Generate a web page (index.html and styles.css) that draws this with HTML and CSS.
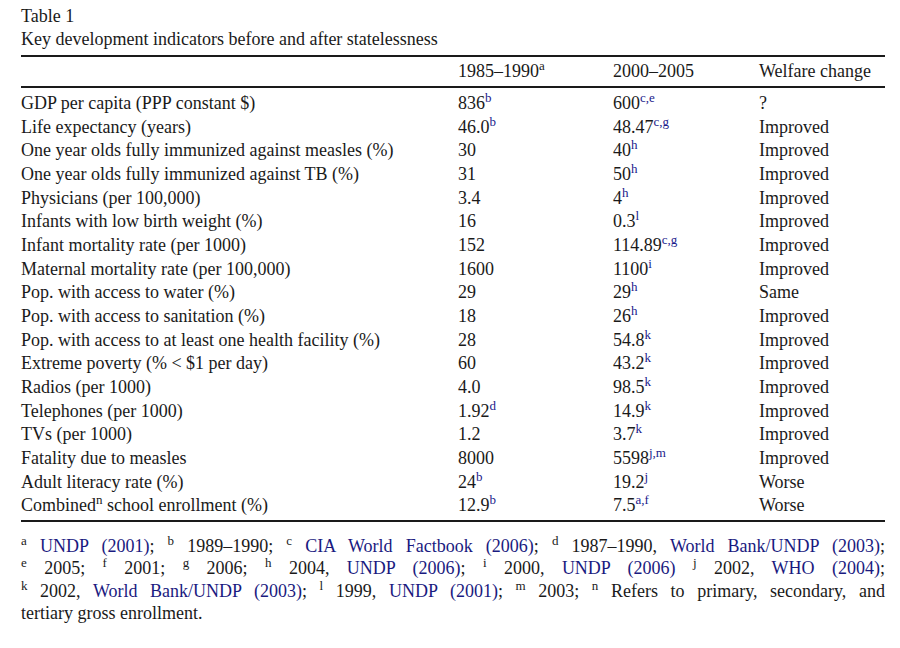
FILE: index.html
```html
<!DOCTYPE html>
<html>
<head>
<meta charset="utf-8">
<link rel="stylesheet" href="styles.css">
</head>
<body>
<div class="page">
  <div class="caption">
    <div class="label">Table 1</div>
    <div class="title">Key development indicators before and after statelessness</div>
  </div>
  <table class="data">
    <thead>
      <tr>
        <th class="c1"></th>
        <th class="c2">1985–1990<sup class="k">a</sup></th>
        <th class="c3">2000–2005</th>
        <th class="c4">Welfare change</th>
      </tr>
    </thead>
    <tbody>
      <tr><td>GDP per capita (PPP constant $)</td><td>836<sup>b</sup></td><td>600<sup>c,e</sup></td><td>?</td></tr>
      <tr><td>Life expectancy (years)</td><td>46.0<sup>b</sup></td><td>48.47<sup>c,g</sup></td><td>Improved</td></tr>
      <tr><td>One year olds fully immunized against measles (%)</td><td>30</td><td>40<sup>h</sup></td><td>Improved</td></tr>
      <tr><td>One year olds fully immunized against TB (%)</td><td>31</td><td>50<sup>h</sup></td><td>Improved</td></tr>
      <tr><td>Physicians (per 100,000)</td><td>3.4</td><td>4<sup>h</sup></td><td>Improved</td></tr>
      <tr><td>Infants with low birth weight (%)</td><td>16</td><td>0.3<sup>l</sup></td><td>Improved</td></tr>
      <tr><td>Infant mortality rate (per 1000)</td><td>152</td><td>114.89<sup>c,g</sup></td><td>Improved</td></tr>
      <tr><td>Maternal mortality rate (per 100,000)</td><td>1600</td><td>1100<sup>i</sup></td><td>Improved</td></tr>
      <tr><td>Pop. with access to water (%)</td><td>29</td><td>29<sup>h</sup></td><td>Same</td></tr>
      <tr><td>Pop. with access to sanitation (%)</td><td>18</td><td>26<sup>h</sup></td><td>Improved</td></tr>
      <tr><td>Pop. with access to at least one health facility (%)</td><td>28</td><td>54.8<sup>k</sup></td><td>Improved</td></tr>
      <tr><td>Extreme poverty (% &lt; $1 per day)</td><td>60</td><td>43.2<sup>k</sup></td><td>Improved</td></tr>
      <tr><td>Radios (per 1000)</td><td>4.0</td><td>98.5<sup>k</sup></td><td>Improved</td></tr>
      <tr><td>Telephones (per 1000)</td><td>1.92<sup>d</sup></td><td>14.9<sup>k</sup></td><td>Improved</td></tr>
      <tr><td>TVs (per 1000)</td><td>1.2</td><td>3.7<sup>k</sup></td><td>Improved</td></tr>
      <tr><td>Fatality due to measles</td><td>8000</td><td>5598<sup>j,m</sup></td><td>Improved</td></tr>
      <tr><td>Adult literacy rate (%)</td><td>24<sup>b</sup></td><td>19.2<sup>j</sup></td><td>Worse</td></tr>
      <tr><td>Combined<sup class="k">n</sup> school enrollment (%)</td><td>12.9<sup>b</sup></td><td>7.5<sup>a,f</sup></td><td>Worse</td></tr>
    </tbody>
  </table>
  <div class="notes">
    <div class="line"><sup>a</sup> <span class="ref">UNDP (2001)</span>; <sup>b</sup> 1989–1990; <sup>c</sup> <span class="ref">CIA World Factbook (2006)</span>; <sup>d</sup> 1987–1990, <span class="ref">World Bank/UNDP (2003)</span>;</div>
    <div class="line"><sup>e</sup> 2005; <sup>f</sup> 2001; <sup>g</sup> 2006; <sup>h</sup> 2004, <span class="ref">UNDP (2006)</span>; <sup>i</sup> 2000, <span class="ref">UNDP (2006)</span> <sup>j</sup> 2002, <span class="ref">WHO (2004)</span>;</div>
    <div class="line"><sup>k</sup> 2002, <span class="ref">World Bank/UNDP (2003)</span>; <sup>l</sup> 1999, <span class="ref">UNDP (2001)</span>; <sup>m</sup> 2003; <sup>n</sup> Refers to primary, secondary, and</div>
    <div class="line last">tertiary gross enrollment.</div>
  </div>
</div>
</body>
</html>
```
FILE: styles.css
```css
html, body {
  margin: 0;
  padding: 0;
  background: #ffffff;
}
body {
  font-family: "Liberation Serif", "Times New Roman", serif;
  font-size: 18px;
  color: #1a1a1a;
}
.page {
  width: 864px;
  padding: 5px 0 0 21px;
}
.caption {
  line-height: 23px;
  padding-bottom: 4px;
}
.data {
  width: 864px;
  border-collapse: collapse;
  border-top: 2px solid #1a1a1a;
  border-bottom: 2px solid #1a1a1a;
}
.data th, .data td {
  padding: 0;
  text-align: left;
  font-weight: normal;
  vertical-align: baseline;
  white-space: nowrap;
}
.data thead th {
  height: 29px;
  line-height: 29px;
  vertical-align: middle;
  border-bottom: 2px solid #1a1a1a;
}
.data .c1 { width: 437px; }
.data .c2 { width: 155px; }
.data .c3 { width: 146px; }
.data tbody td {
  height: 23.65px;
  line-height: 23.65px;
}
.data tbody tr:first-child td { padding-top: 4px; }
.data tbody tr:last-child td { padding-bottom: 2px; }
sup {
  font-size: 13px;
  line-height: 0;
  vertical-align: 7px;
  color: #1a1a8c;
}
sup.k { color: #1a1a1a; }
.notes {
  padding: 13px 0 0 0;
  line-height: 22.5px;
}
.line {
  text-align: justify;
  text-align-last: justify;
}
.line.last {
  text-align-last: left;
}
.notes sup { color: #1a1a1a; }
.ref { color: #1a1a80; }
```
